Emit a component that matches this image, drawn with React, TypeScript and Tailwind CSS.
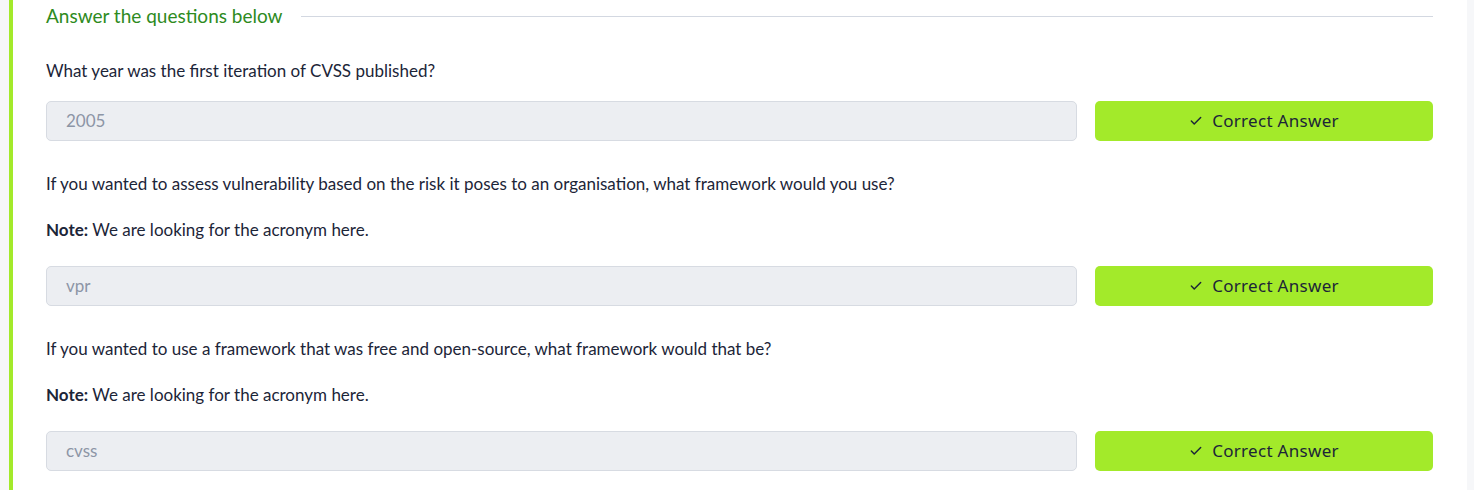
import { Check } from "lucide-react";

const QUESTIONS = [
  { text: "What year was the first iteration of CVSS published?", note: false, answer: "2005" },
  {
    text: "If you wanted to assess vulnerability based on the risk it poses to an organisation, what framework would you use?",
    note: true,
    answer: "vpr",
  },
  {
    text: "If you wanted to use a framework that was free and open-source, what framework would that be?",
    note: true,
    answer: "cvss",
  },
];

function AnswerRow({ answer }: { answer: string }) {
  return (
    <div className="flex gap-[18px]">
      <div className="flex h-10 flex-1 items-center rounded-[5px] border border-[#d7dbe2] bg-[#eceef2] px-[19px] text-[17px] text-[#8c95a6]">
        {answer}
      </div>
      <button className="flex h-10 w-[338px] items-center justify-center gap-[9px] rounded-[5px] bg-[#a3ea2a] font-['Noto_Sans',sans-serif] text-[17px] tracking-[0.3px] text-[#1c2538]">
        <Check className="size-[14px]" strokeWidth={2.5} aria-hidden />
        Correct Answer
      </button>
    </div>
  );
}

export default function App() {
  return (
    <div className="flex h-[490px] w-full bg-white font-['Lato','Open_Sans',sans-serif] text-[#1c2538]">
      <div className="w-[9px] shrink-0 bg-[#f6f7f9]" />
      <div className="flex-1 border-l-4 border-[#a3ea2a] pl-[33px] pr-[34px]">
        <div className="flex h-[32px] items-center gap-[18px]">
          <h3 className="text-[19px] text-[#2e8b1e]">Answer the questions below</h3>
          <div className="h-px flex-1 bg-[#d3d8e1]" />
        </div>
        {QUESTIONS.map((q, i) => (
          <div key={q.answer} className={i === 0 ? "mt-[27px]" : "mt-[31px]"}>
            <p className="text-[17px] leading-[24px]">{q.text}</p>
            {q.note && (
              <p className="mt-[22px] text-[17px] leading-[24px]">
                <b className="font-bold">Note:</b> We are looking for the acronym here.
              </p>
            )}
            <div className={q.note ? "mt-[24px]" : "mt-[18px]"}>
              <AnswerRow answer={q.answer} />
            </div>
          </div>
        ))}
      </div>
      <div className="w-[7px] shrink-0 bg-[#f6f7f9]" />
    </div>
  );
}
